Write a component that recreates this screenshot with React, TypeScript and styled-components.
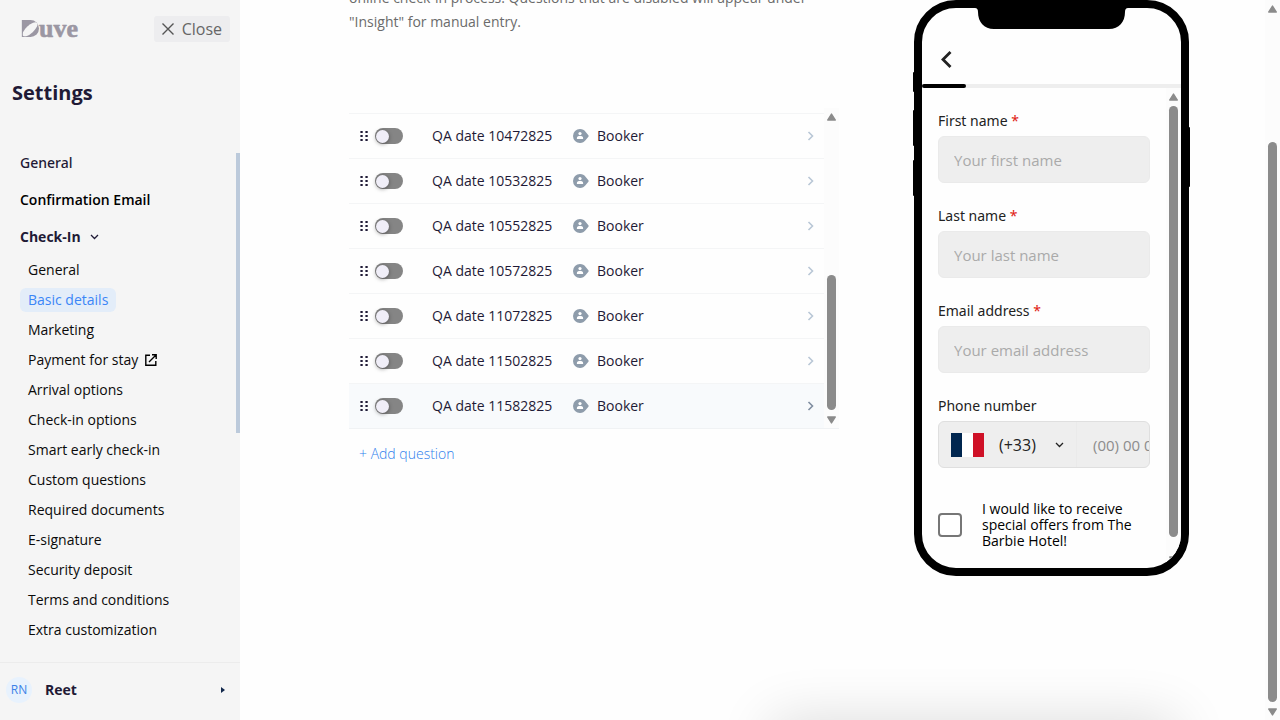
import React from "react";
import styled, { createGlobalStyle } from "styled-components";

const GlobalStyle = createGlobalStyle`
  *, *::before, *::after { box-sizing: border-box; }
  body {
    margin: 0;
    background: #fefefe;
    color: #1f1a36;
    font: 14px/20px "Open Sans", "Noto Sans", sans-serif;
  }
  button, input, select { font: inherit; color: inherit; margin: 0; }
  button { cursor: pointer; border: 0; background: none; padding: 0; }
  a { color: inherit; text-decoration: none; }
  ul { list-style: none; margin: 0; padding: 0; }
  svg { display: block; flex: none; }
`;

const Shell = styled.div`
  display: flex;
  height: 100vh;
  overflow: hidden;
`;

/* ---------- sidebar ---------- */

const Sidebar = styled.aside`
  flex: none;
  width: 240px;
  display: flex;
  flex-direction: column;
  background: #f5f5f5;
`;

const SidebarHeader = styled.header`
  display: flex;
  justify-content: space-between;
  align-items: center;
  padding: 16px 10px 0 22px;
`;

const CloseButton = styled.button`
  display: flex;
  align-items: center;
  gap: 8px;
  height: 26px;
  padding: 0 8px;
  border-radius: 3px;
  background: #ededef;
  color: #666;
  font-size: 16px;
`;

const SettingsTitle = styled.h1`
  margin: 37px 0 0;
  padding: 0 12px;
  font-size: 20px;
  line-height: 28px;
  font-weight: 700;
`;

const NavArea = styled.div`
  flex: 1;
  min-height: 0;
  margin-top: 46px;
  display: flex;
  overflow: hidden;
`;

const Nav = styled.nav`
  flex: 1;
  padding-left: 20px;
`;

const NavLink = styled.a<{ $weight: number; $dark?: boolean }>`
  display: flex;
  align-items: center;
  gap: 9px;
  margin-bottom: 17px;
  font-family: ${(p) => (p.$weight === 500 ? '"Noto Sans", sans-serif' : "inherit")};
  font-weight: ${(p) => p.$weight};
  color: ${(p) => (p.$dark ? "#000" : "#1f1a36")};
`;

const SubNav = styled.ul`
  margin-top: -9px;
`;

const SubItem = styled.li`
  display: flex;
  align-items: center;
  height: 30px;
  color: #0a0a0a;
`;

const SubLink = styled.a<{ $active?: boolean }>`
  display: flex;
  align-items: center;
  gap: 7px;
  height: 24px;
  padding: 0 8px;
  border-radius: 6px;
  background: ${(p) => (p.$active ? "#e3edf9" : "transparent")};
  color: ${(p) => (p.$active ? "#3b86f7" : "inherit")};
`;

const NavThumb = styled.div`
  width: 4px;
  height: 55%;
  background: #bccadb;
`;

const UserButton = styled.button`
  display: flex;
  align-items: center;
  height: 58px;
  padding: 0 15px 4px 6px;
  border-top: 1px solid #ececec;
  font-weight: 700;
`;

const Avatar = styled.span`
  display: grid;
  place-items: center;
  width: 26px;
  height: 26px;
  margin-right: 13px;
  border-radius: 50%;
  background: #e8f2fd;
  color: #3b82e8;
  font-size: 12px;
  font-weight: 400;
`;

const UserName = styled.span`
  flex: 1;
  text-align: left;
`;

/* ---------- scroll rail ---------- */

const Rail = styled.div`
  flex: none;
  width: 15px;
  display: flex;
  flex-direction: column;
  align-items: center;
  padding: 5px 0 4px;
  background: #fcfcfc;
`;

const RailSpace = styled.div<{ $grow: number }>`
  flex: ${(p) => p.$grow} 1 0;
`;

const RailThumb = styled(RailSpace)`
  width: 9px;
  border-radius: 5px;
  background: #8b8b8b;
`;

function ScrollRail({ before, thumb, after }: { before: number; thumb: number; after: number }) {
  return (
    <Rail aria-hidden="true">
      <svg width="9" height="8" viewBox="0 0 9 8"><path d="M4.500 1 8.300 7H.7Z" fill="#8b8b8b" stroke="#8b8b8b" strokeWidth="1.4" strokeLinejoin="round" /></svg>
      <RailSpace $grow={before} />
      <RailThumb $grow={thumb} />
      <RailSpace $grow={after} />
      <svg width="9" height="8" viewBox="0 0 9 8"><path d="M4.500 7 .7 1H8.300Z" fill="#8b8b8b" stroke="#8b8b8b" strokeWidth="1.4" strokeLinejoin="round" /></svg>
    </Rail>
  );
}

/* ---------- main ---------- */

const Main = styled.main`
  flex: 1;
  min-width: 0;
  display: flex;
  justify-content: space-between;
  align-items: flex-start;
  padding: 0 76px 0 109px;
  overflow: hidden;
`;

const Questions = styled.section`
  width: 490px;
  margin-top: -14px;
`;

const Intro = styled.p`
  margin: 0 0 74px;
  line-height: 24px;
  color: #6b6b6b;
`;

const ListBox = styled.div`
  display: flex;
  border-bottom: 1px solid #f0f2f4;
`;

const QuestionList = styled.ul`
  flex: 1;
  padding-top: 5px;
`;

const QuestionRow = styled.li<{ $hovered?: boolean }>`
  display: grid;
  grid-template-columns: 15px 57px 141px 24px 1fr 12px;
  align-items: center;
  height: 45px;
  padding: 0 5px 0 11px;
  border-top: 1px solid #f4f5f6;
  background: ${(p) => (p.$hovered ? "#f8fafc" : "transparent")};
  color: ${(p) => (p.$hovered ? "#7f8da0" : "#b9c7d6")};
`;

const Cell = styled.span`
  color: #1f1a36;
`;

const Toggle = styled.input`
  appearance: none;
  width: 28px;
  height: 16px;
  border-radius: 8px;
  background: #858585;
  display: flex;
  align-items: center;
  padding: 0 1px;
  cursor: pointer;

  &::before {
    content: "";
    width: 13px;
    height: 13px;
    border-radius: 50%;
    background: #f0eef8;
    box-shadow: 0 1px 4px rgba(0, 0, 0, 0.4);
  }
`;

const AddButton = styled.button`
  margin: 15px 0 0 10px;
  color: #2f80ed;
  font-weight: 300;
`;

/* ---------- phone preview ---------- */

const Phone = styled.section`
  position: relative;
  flex: none;
  width: 275px;
  height: 576px;
  border: 8px solid #000;
  border-radius: 42px;
`;

const SideKey = styled.span<{ $side: "left" | "right"; $top: number; $length: number }>`
  position: absolute;
  ${(p) => p.$side}: -9px;
  top: ${(p) => p.$top}px;
  width: 4px;
  height: ${(p) => p.$length}px;
  border-radius: 1px;
  background: #000;
`;

const Notch = styled.svg`
  position: absolute;
  top: -1px;
  left: 53px;
`;

const Screen = styled.div`
  display: flex;
  flex-direction: column;
  height: 100%;
  border-radius: 34px;
  overflow: hidden;
`;

const BackButton = styled.button`
  align-self: flex-start;
  margin: 43px 0 16px 18px;
`;

const Progress = styled.div`
  flex: none;
  height: 4px;
  background: #eee;
`;

const ProgressValue = styled.div`
  width: 17%;
  height: 4px;
  border-radius: 2px;
  background: #000;
`;

const FormArea = styled.div`
  flex: 1;
  min-height: 0;
  display: flex;
`;

const Form = styled.form`
  flex: 1;
  min-width: 0;
  padding: 23px 16px 0;
  color: #222;
`;

const Field = styled.div`
  display: flex;
  flex-direction: column;
  gap: 5px;
  margin-bottom: 23px;
`;

const FieldLabel = styled.label`
  font-family: "Noto Sans", sans-serif;
`;

const Required = styled.span`
  color: #e02010;
`;

const TextInput = styled.input`
  width: 100%;
  height: 47px;
  padding: 0 15px;
  border: 1px solid #eaeaea;
  border-radius: 6px;
  background: #eee;
  font-size: 15px;
  &::placeholder { color: #aaa; opacity: 1; }
`;

const PhoneField = styled.div`
  display: flex;
  align-items: center;
  height: 47px;
  padding-left: 12px;
  border: 1px solid #dfdfdf;
  border-radius: 6px;
  background: #eee;
  overflow: hidden;
`;

const CodeWrap = styled.div`
  flex: none;
  display: flex;
  align-items: center;
  height: 100%;
  margin-left: 15px;
  padding-right: 12px;
  border-right: 1px solid #eaeaea;
`;

const CodeSelect = styled.select`
  appearance: none;
  width: 56px;
  padding: 0;
  border: 0;
  background: none;
  font-size: 16px;
`;

const NumberInput = styled.input`
  flex: 1;
  min-width: 0;
  padding: 0 0 0 16px;
  border: 0;
  background: none;
  font-size: 15px;
  &::placeholder { color: #8c8c8c; opacity: 1; }
`;

const Offers = styled.label`
  display: flex;
  align-items: center;
  gap: 20px;
  margin-top: 33px;
  line-height: 16px;
  color: #000;
`;

const OffersBox = styled.input`
  appearance: none;
  flex: none;
  width: 24px;
  height: 24px;
  border: 2px solid #767676;
  border-radius: 4px;
  background: #fff;
`;

const BarShadow = styled.div`
  position: fixed;
  top: 100%;
  left: 772px;
  right: 104px;
  height: 60px;
  box-shadow: 0 0 56px rgba(0, 0, 0, 0.14);
`;

/* ---------- icons ---------- */

const LogoSvg = styled.svg`
  overflow: visible;
`;

const Logo = () => (
  <LogoSvg width="60" height="18" viewBox="0 0 60 18" role="img" aria-label="Duve">
    <clipPath id="mark"><rect x="-9" width="26" height="17" rx="8.5" /></clipPath>
    <g clipPath="url(#mark)">
      <rect width="18" height="17" fill="#9b97a3" />
      <ellipse cx="8" cy="9.300" rx="9.600" ry="3.900" transform="rotate(-43 8 9.300)" fill="#f5f5f5" />
      <path d="M.3 0V17H6" fill="none" stroke="#9b97a3" strokeWidth="0.800" />
    </g>
    <text x="17" y="17" fontFamily="Liberation Serif, serif" fontWeight="700" fontSize="26" fill="#9b97a3" stroke="#9b97a3" strokeWidth="0.600">uve</text>
  </LogoSvg>
);

const DragDots = () => (
  <svg width="9" height="11" viewBox="0 0 9 11" fill="#1f1a36">
    {[0, 4, 8].map((y) => (
      <React.Fragment key={y}>
        <rect x="0.400" y={y} width="2.300" height="2" />
        <rect x="5.400" y={y} width="2.300" height="2" />
      </React.Fragment>
    ))}
  </svg>
);

const PersonTag = () => (
  <svg width="16" height="14" viewBox="0 0 16 14">
    <path d="M7 0C9.6 0 11.200 1.100 12.500 2.700L15.400 6.200Q16 7 15.400 7.800L12.500 11.300C11.200 12.900 9.600 14 7 14A7 7 0 0 1 7 0Z" fill="#8e9cab" />
    <circle cx="7" cy="4.600" r="1.600" fill="#fff" />
    <path d="M3.900 9.900V8.900C3.900 7.700 5.200 7.100 7 7.100S10.100 7.700 10.100 8.900V9.900Z" fill="#fff" />
  </svg>
);

const ChevronRight = () => (
  <svg width="8" height="10" viewBox="0 0 8 10" fill="none" stroke="currentColor" strokeWidth="1.6"><path d="M1.500 1 5.500 5 1.500 9" /></svg>
);

const ChevronDown = () => (
  <svg width="9" height="6" viewBox="0 0 9 6" fill="none" stroke="currentColor" strokeWidth="1.300"><path d="M1 1 4.500 4.500 8 1" /></svg>
);

const OpenIcon = () => (
  <svg width="12" height="12" viewBox="0 0 12 12" fill="none" stroke="#000" strokeWidth="1.400"><path d="M5 1.200H.8V11.200H10.800V7M7 .8H11.200V5M11 1 4 8" /></svg>
);

const subItems = [
  "General", "Basic details", "Marketing", "Payment for stay", "Arrival options", "Check-in options",
  "Smart early check-in", "Custom questions", "Required documents", "E-signature", "Security deposit",
  "Terms and conditions", "Extra customization",
];

const questions = ["10472825", "10532825", "10552825", "10572825", "11072825", "11502825", "11582825"];

const fields = [
  { id: "first", label: "First name", hint: "Your first name" },
  { id: "last", label: "Last name", hint: "Your last name" },
  { id: "email", label: "Email address", hint: "Your email address" },
];

export default function App() {
  return (
    <Shell>
      <GlobalStyle />
      <Sidebar>
        <SidebarHeader>
          <Logo />
          <CloseButton type="button">
            <svg width="12" height="12" viewBox="0 0 12 12" stroke="#555" strokeWidth="1.400"><path d="M.5.500 11.500 11.500M11.500.500.500 11.500" /></svg>
            Close
          </CloseButton>
        </SidebarHeader>
        <SettingsTitle>Settings</SettingsTitle>
        <NavArea>
          <Nav>
            <NavLink href="#general" $weight={500}>General</NavLink>
            <NavLink href="#confirmation" $weight={600} $dark>Confirmation Email</NavLink>
            <NavLink href="#check-in" $weight={700}>Check-In <ChevronDown /></NavLink>
            <SubNav>
              {subItems.map((item) => (
                <SubItem key={item}>
                  <SubLink href="#item" $active={item === "Basic details"}>
                    {item}
                    {item === "Payment for stay" && <OpenIcon />}
                  </SubLink>
                </SubItem>
              ))}
            </SubNav>
          </Nav>
          <NavThumb />
        </NavArea>
        <UserButton type="button">
          <Avatar>RN</Avatar>
          <UserName>Reet</UserName>
          <svg width="4" height="6" viewBox="0 0 4 6"><path d="M0 0 4 3 0 6Z" fill="#12284c" /></svg>
        </UserButton>
      </Sidebar>

      <Main>
        <Questions>
          <Intro>
            online check-in process. Questions that are disabled will appear under "Insight" for manual entry.
          </Intro>
          <ListBox>
            <QuestionList>
              {questions.map((q, i) => (
                <QuestionRow key={q} $hovered={i === questions.length - 1}>
                  <DragDots />
                  <Toggle type="checkbox" role="switch" aria-label={`QA date ${q}`} />
                  <Cell>QA date {q}</Cell>
                  <PersonTag />
                  <Cell>Booker</Cell>
                  <ChevronRight />
                </QuestionRow>
              ))}
            </QuestionList>
            <ScrollRail before={154} thumb={135} after={6} />
          </ListBox>
          <AddButton type="button">+ Add question</AddButton>
        </Questions>

        <Phone>
          <SideKey $side="left" $top={64} $length={20} />
          <SideKey $side="left" $top={102} $length={36} />
          <SideKey $side="left" $top={152} $length={36} />
          <SideKey $side="right" $top={119} $length={60} />
          <Notch width="153" height="22" viewBox="0 0 153 22">
            <path d="M0 0V1Q3 1 3 5C3 15 9 22 19 22H134C144 22 150 15 150 5Q150 1 153 1V0Z" fill="#000" />
          </Notch>
          <Screen>
            <BackButton type="button" aria-label="Back">
              <svg width="12" height="17" viewBox="0 0 12 17" fill="none" stroke="#222" strokeWidth="2.800"><path d="M10.500 1 3 8.500 10.500 16" /></svg>
            </BackButton>
            <Progress><ProgressValue /></Progress>
            <FormArea>
              <Form>
                {fields.map((f) => (
                  <Field key={f.id}>
                    <FieldLabel htmlFor={f.id}>{f.label} <Required>*</Required></FieldLabel>
                    <TextInput id={f.id} placeholder={f.hint} />
                  </Field>
                ))}
                <Field>
                  <FieldLabel htmlFor="phone">Phone number</FieldLabel>
                  <PhoneField>
                    <svg width="33" height="24" viewBox="0 0 33 24">
                      <rect width="11" height="24" fill="#00264f" />
                      <rect x="11" width="11" height="24" fill="#fff" />
                      <rect x="22" width="11" height="24" fill="#cf1127" />
                    </svg>
                    <CodeWrap>
                      <CodeSelect aria-label="Country code"><option>(+33)</option></CodeSelect>
                      <ChevronDown />
                    </CodeWrap>
                    <NumberInput id="phone" type="tel" placeholder="(00) 00 00 00 00" />
                  </PhoneField>
                </Field>
                <Offers>
                  <OffersBox type="checkbox" />
                  <span>I would like to receive special offers from The Barbie Hotel!</span>
                </Offers>
              </Form>
              <ScrollRail before={5} thumb={430} after={19} />
            </FormArea>
          </Screen>
        </Phone>
      </Main>
      <ScrollRail before={129} thumb={560} after={6} />
      <BarShadow />
    </Shell>
  );
}
